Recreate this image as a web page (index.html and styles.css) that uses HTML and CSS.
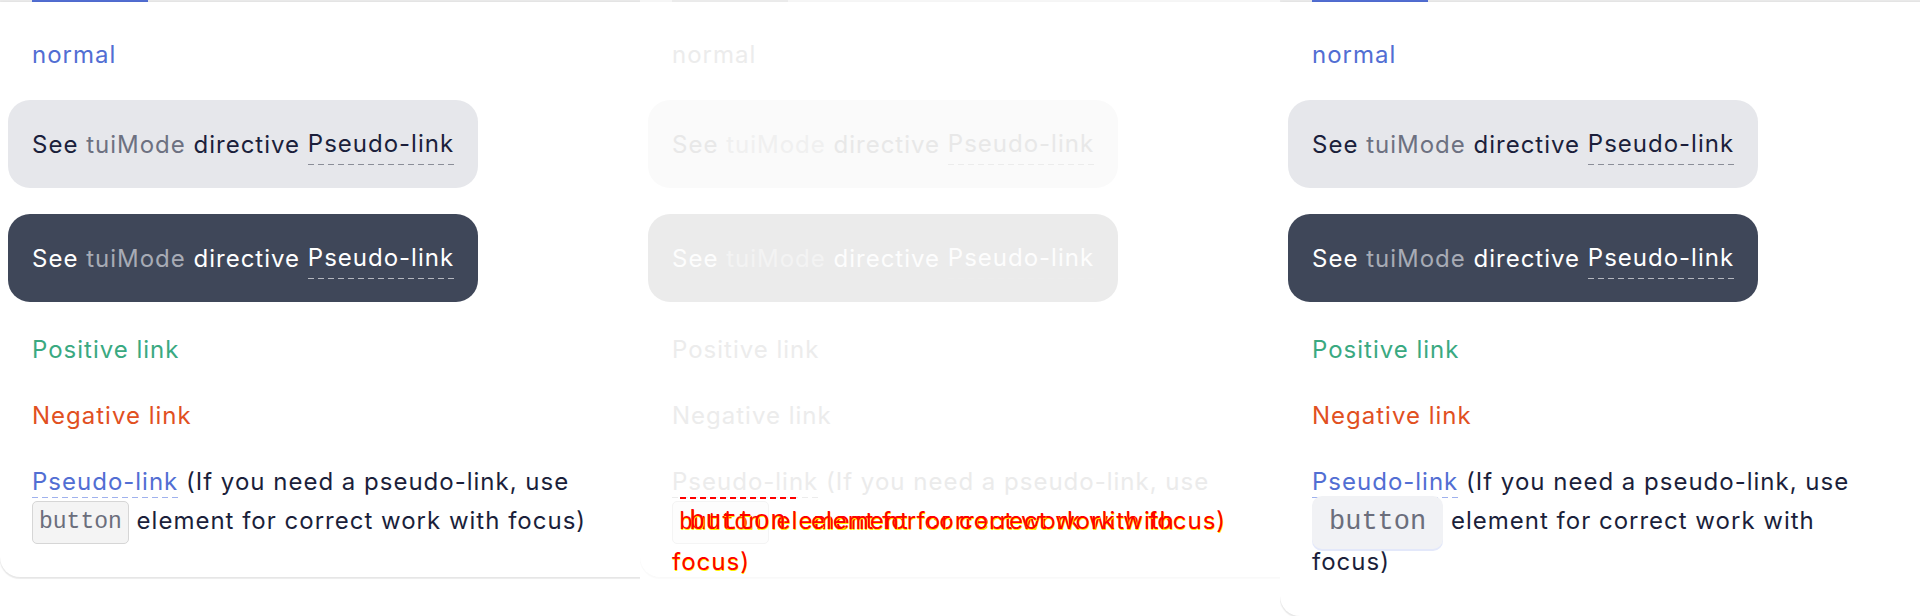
FILE: index.html
```html
<!DOCTYPE html>
<html lang="en">
<head>
<meta charset="utf-8">
<title>Link modes</title>
<link rel="stylesheet" href="styles.css">
</head>
<body>
<div class="stage">
  <section class="panel">
    <div class="tabs"><span class="tabs-active"></span></div>
    <div class="card">
      <a class="link">normal</a>
      <div class="mode mode-light">See&nbsp;<span class="muted">tuiMode</span>&nbsp;directive&nbsp;<span class="pseudo">Pseudo-link</span></div>
      <div class="mode mode-dark">See&nbsp;<span class="muted">tuiMode</span>&nbsp;directive&nbsp;<span class="pseudo">Pseudo-link</span></div>
      <a class="link link-positive">Positive link</a>
      <a class="link link-negative">Negative link</a>
      <p class="note"><span class="link pseudo">Pseudo-link</span> (If you need a pseudo-link, use <span class="tail"><code class="code">button</code> element for correct work with focus)</span></p>
    </div>
  </section>

  <section class="panel panel-ghost">
    <div class="tabs"><span class="tabs-active"></span></div>
    <div class="card">
      <a class="link">normal</a>
      <div class="mode mode-light">See&nbsp;<span class="muted">tuiMode</span>&nbsp;directive&nbsp;<span class="pseudo">Pseudo-link</span></div>
      <div class="mode mode-dark">See&nbsp;<span class="muted">tuiMode</span>&nbsp;directive&nbsp;<span class="pseudo">Pseudo-link</span></div>
      <a class="link link-positive">Positive link</a>
      <a class="link link-negative">Negative link</a>
      <p class="note"><span class="link pseudo">Pseudo-link</span> (If you need a pseudo-link, use <span class="tail"><code class="code">button</code> element for correct work with focus)</span>
        <span class="diff-dash"></span>
        <span class="diff diff-a"><span class="diff-code">button</span> element for correct work with focus)</span>
        <span class="diff diff-b"><span class="diff-code diff-code-lg">button</span> element for correct work with focus)</span>
      </p>
    </div>
  </section>

  <section class="panel">
    <div class="tabs"><span class="tabs-active"></span></div>
    <div class="card">
      <a class="link">normal</a>
      <div class="mode mode-light">See&nbsp;<span class="muted">tuiMode</span>&nbsp;directive&nbsp;<span class="pseudo">Pseudo-link</span></div>
      <div class="mode mode-dark">See&nbsp;<span class="muted">tuiMode</span>&nbsp;directive&nbsp;<span class="pseudo">Pseudo-link</span></div>
      <a class="link link-positive">Positive link</a>
      <a class="link link-negative">Negative link</a>
      <p class="note"><span class="link pseudo">Pseudo-link</span> (If you need a pseudo-link, use <span class="tail"><code class="code code-focused">button</code> element for correct work with focus)</span></p>
    </div>
  </section>
</div>
</body>
</html>
```

FILE: styles.css
```css
* { box-sizing: border-box; }

html, body { margin: 0; padding: 0; }

body {
  width: 1920px;
  height: 616px;
  overflow: hidden;
  background: #ffffff;
  font-family: Inter, "Noto Sans", sans-serif;
  font-size: 24px;
  letter-spacing: 1px;
  line-height: 39px;
  color: #1b1f3b;
}

.stage {
  display: grid;
  grid-template-columns: repeat(3, 640px);
  height: 616px;
}

.panel {
  position: relative;
  overflow: hidden;
  height: 616px;
}

.tabs {
  height: 2px;
  background: #ebebeb;
  padding-left: 32px;
}

.tabs-active {
  display: block;
  width: 116px;
  height: 2px;
  background: #526ed3;
}

.card {
  margin-right: -40px;
  background: #ffffff;
  border-radius: 0 0 20px 20px;
  box-shadow: 0 2px 1px rgba(0, 0, 0, 0.07), 0 0 3px rgba(0, 0, 0, 0.08);
  padding: 33px 0 35px 32px;
  display: flex;
  flex-direction: column;
  align-items: flex-start;
}

.link {
  color: #526ed3;
  text-decoration: none;
}

.link-positive { color: #3aa981; margin-top: 28px; }
.link-negative { color: #e1501f; margin-top: 27px; }

.mode {
  display: flex;
  align-items: center;
  height: 88px;
  margin-left: -24px;
  padding: 0 24px;
  border-radius: 22px;
  white-space: nowrap;
}

.mode-light {
  margin-top: 26px;
  background: #e6e7eb;
  color: #1b1f3b;
}

.mode-light .muted { color: #6d7181; }

.mode-dark {
  margin-top: 26px;
  background: #3f4759;
  color: #ffffff;
}

.mode-dark .muted { color: #a7abb5; }

.pseudo {
  padding-bottom: 2px;
  background-image: linear-gradient(to right, #8b8e98 60%, transparent 60%);
  background-size: 10px 1px;
  background-repeat: repeat-x;
  background-position: 0 100%;
}

.mode-dark .pseudo {
  background-image: linear-gradient(to right, #b4b7bf 60%, transparent 60%);
}

.note .pseudo {
  background-image: linear-gradient(to right, #9fb1ee 60%, transparent 60%);
}

.note {
  position: relative;
  margin: 27px 0 0;
  max-width: 568px;
}

.code {
  display: inline-block;
  vertical-align: middle;
  margin: -2px 0;
  padding: 9px 6px;
  font-family: "Liberation Mono", "DejaVu Sans Mono", monospace;
  font-size: 23px;
  line-height: 23px;
  letter-spacing: 0;
  color: #6b6e7c;
  background: #f4f4f4;
  border: 1px solid #d6d6d6;
  border-radius: 5px;
}

.code-focused {
  margin: -7px 0;
  padding: 13px 17px;
  font-size: 27px;
  line-height: 27px;
  border: 0;
  border-radius: 10px;
  background: #f1f2f5;
  box-shadow: 0 2px 0 #e3e8fa;
}

/* Ghost (diff) panel */
.panel-ghost .tabs { background: #f6f6f6; }
.panel-ghost .tabs-active { background: #ebebeb; }
.panel-ghost .card { box-shadow: 0 2px 1px rgba(0, 0, 0, 0.02), 0 0 3px rgba(0, 0, 0, 0.02); }
.panel-ghost .link,
.panel-ghost .link-positive,
.panel-ghost .link-negative { color: #ececec; }
.panel-ghost .mode-light { background: #fafafa; color: #e8e8e8; }
.panel-ghost .mode-light .muted { color: #f0f0f0; }
.panel-ghost .mode-dark { background: #ebebeb; color: #fdfdfd; }
.panel-ghost .mode-dark .muted { color: #f3f3f3; }
.panel-ghost .pseudo { background-image: linear-gradient(to right, #ececec 60%, transparent 60%); }
.panel-ghost .note { color: #ebebeb; }
.panel-ghost .tail { color: #f6f6f6; }
.panel-ghost .code { background: #fdfdfd; border-color: #f4f4f4; color: #f6f6f6; }

.diff-dash {
  position: absolute;
  left: 8px;
  top: 35px;
  width: 118px;
  height: 2px;
  background-image: linear-gradient(to right, #ff0000 60%, transparent 60%);
  background-size: 10px 2px;
}

.diff {
  position: absolute;
  top: 39px;
  left: 0;
  color: #ff0000;
  text-shadow: 0.6px 0.5px 0 #fff200;
}

.diff-a {
  white-space: nowrap;
}

.diff-b {
  width: 562px;
}

.diff-code {
  display: inline-block;
  padding: 0 7px;
  font-family: "Liberation Mono", "DejaVu Sans Mono", monospace;
  font-size: 23px;
  letter-spacing: 0;
}

.diff-code-lg {
  padding: 0 17px;
  font-size: 27px;
}
```
